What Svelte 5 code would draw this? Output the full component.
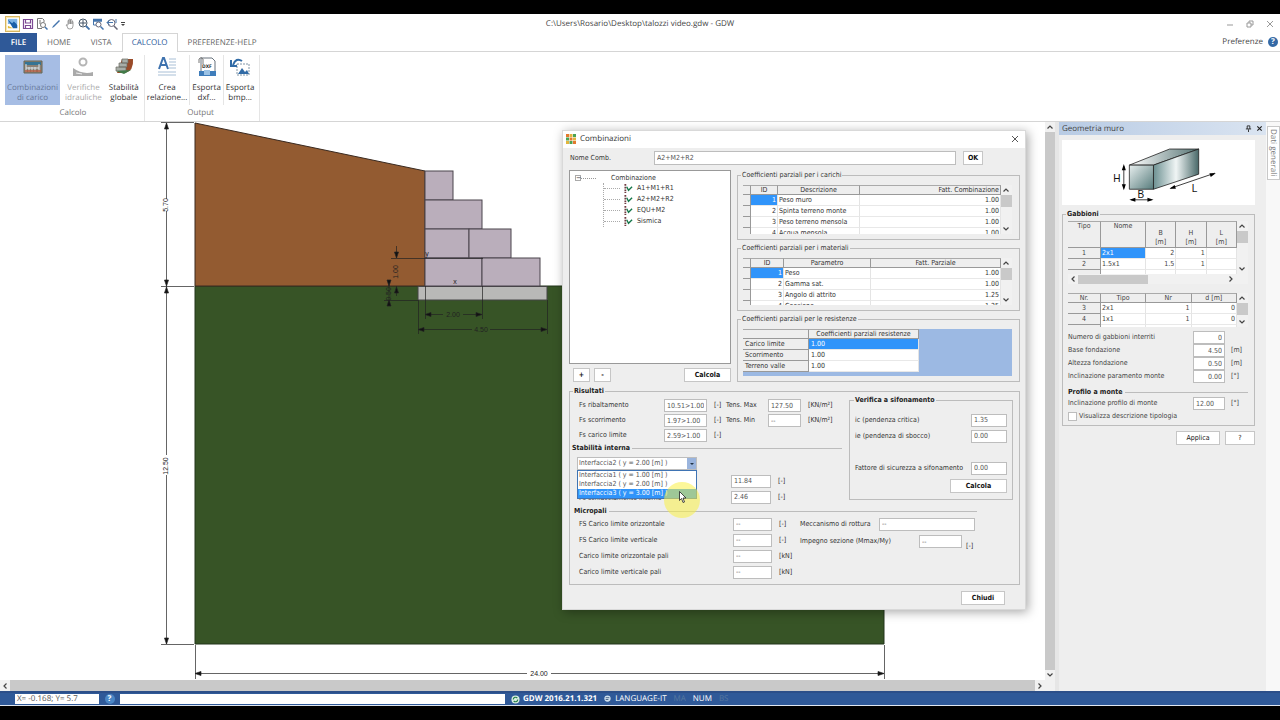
<script>
  const tabs = ["HOME", "VISTA", "CALCOLO", "PREFERENZE-HELP"];
  const combinations = ["A1+M1+R1", "A2+M2+R2", "EQU+M2", "Sismica"];
  const interfaces = [
    "Interfaccia1 ( y = 1.00 [m] )",
    "Interfaccia2 ( y = 2.00 [m] )",
    "Interfaccia3 ( y = 3.00 [m] )"
  ];

  const coefficients = [
    {
      id: "loads",
      title: "Coefficienti parziali per i carichi",
      columns: ["ID", "Descrizione", "Fatt. Combinazione"],
      rows: [
        ["Peso muro", "1.00"],
        ["Spinta terreno monte", "1.00"],
        ["Peso terreno mensola", "1.00"],
        ["Acqua mensola", "1.00"]
      ]
    },
    {
      id: "materials",
      title: "Coefficienti parziali per i materiali",
      columns: ["ID", "Parametro", "Fatt. Parziale"],
      rows: [
        ["Peso", "1.00"],
        ["Gamma sat.", "1.00"],
        ["Angolo di attrito", "1.25"],
        ["Coesione", "1.25"]
      ]
    }
  ];

  const resistances = [
    ["Carico limite", "1.00"],
    ["Scorrimento", "1.00"],
    ["Terreno valle", "1.00"]
  ];

  const results = [
    { label: "Fs ribaltamento", value: "10.51>1.00", side: "Tens. Max", sideValue: "127.50", unit: "[KN/m²]" },
    { label: "Fs scorrimento", value: "1.97>1.00", side: "Tens. Min", sideValue: "--", unit: "[KN/m²]" },
    { label: "Fs carico limite", value: "2.59>1.00" }
  ];

  const piles = [
    { label: "FS Carico limite orizzontale", unit: "[-]" },
    { label: "FS Carico limite verticale", unit: "[-]" },
    { label: "Carico limite orizzontale pali", unit: "[kN]" },
    { label: "Carico limite verticale pali", unit: "[kN]" }
  ];

  const geometry = [
    { label: "Numero di gabbioni interriti", value: "0", unit: "" },
    { label: "Base fondazione", value: "4.50", unit: "[m]" },
    { label: "Altezza fondazione", value: "0.50", unit: "[m]" },
    { label: "Inclinazione paramento monte", value: "0.00", unit: "[°]" }
  ];

  // x, y, width, height of each gabion
  const blocks = [
    [425, 171, 28, 29],
    [425, 200, 57, 29],
    [425, 229, 44, 29],
    [469, 229, 42, 29],
    [425, 258, 57, 28],
    [482, 258, 58, 28]
  ];

  let activeTab = $state("CALCOLO");
  let combinationName = $state("A2+M2+R2");
  let selected = $state(interfaces[1]);
  let hovered = $state(2);
  let showTypology = $state(false);
</script>

{#snippet chevron(direction)}
  <svg class="chevron {direction}" viewBox="0 0 10 10" aria-hidden="true">
    <path d="M2.500 6.500 5 4l2.500 2.500" fill="none" stroke="#444" stroke-width="1.200" />
  </svg>
{/snippet}

{#snippet scrollbar()}
  <div class="scrollbar">
    {@render chevron("up")}
    <div class="thumb"></div>
    {@render chevron("down")}
  </div>
{/snippet}

{#snippet arrow(x, y, angle)}
  <path d="M0 0-6-2v4z" transform="translate({x} {y}) rotate({angle})" />
{/snippet}

<div class="app">
  <header>
    <div class="titlebar">
      <div class="quick">
        <span class="app-icon">
          <svg viewBox="0 0 14 14"><path fill="#fff" d="M0 0h14v14H0z" /><path fill="#7fb4e6" d="M1 1h11v6H1z" /><path fill="#1b5fa8" d="M1 2l5 4 2-2 4 4v4H7z" /><path fill="#e4bd3b" d="M1 9l6 3H1z" /></svg>
        </span>
        <svg viewBox="0 0 12 12" fill="none" stroke="#7d4a94" stroke-width="1.200"><path d="M1.500 1.500h9v9h-9zM3.500 1.500v3.500h5V1.500M3.500 10.500v-3h5v3" /></svg>
        <svg viewBox="0 0 12 12" fill="none" stroke="#777"><path d="M8 4V2L6.500.500H1.500v10H6M3 3h2M3 5h2" /><circle cx="7" cy="7" r="2.500" /><path d="m9 9 2.500 2.500" stroke="#4475ad" stroke-width="1.500" /></svg>
        <svg viewBox="0 0 12 12"><path d="m2 10 1-2 6-6 1 1-6 6z" fill="#4475ad" /></svg>
        <svg viewBox="0 0 12 12" fill="none" stroke="#888"><path d="M4 7V3q0-1 1-1V6V1.500q1-1 1.500 0V6V2q1-1 1.500 0v4V3.500q1-.500 1 .500v4q0 3-3 3T3.500 9L2 7q.500-1 2 .500" stroke-width=".8" /></svg>
        <svg viewBox="0 0 12 12" fill="none" stroke="#456"><circle cx="5" cy="5" r="4" /><path d="M5 2v6M2 5h6" /><path d="m8 8 3.500 3.500" stroke="#4475ad" stroke-width="1.800" /></svg>
        <svg viewBox="0 0 12 12" fill="none" stroke="#4475ad"><path d="M1 1.500h9M1 3h9" stroke-width="1.500" /><path d="M1.500 3v4H4" /><circle cx="6.500" cy="6.500" r="2.500" fill="#fff" stroke="#667" /><path d="m8.500 8.500 3 3" stroke-width="1.500" /></svg>
        <svg viewBox="0 0 12 12" fill="none" stroke="#667"><circle cx="5.500" cy="5" r="3.500" /><path d="m8 8 3.500 3.500" stroke-width="1.500" /><path d="M1 4.500h6M3.500 2 1 4.500 3.500 7M10 1v4" stroke="#4475ad" /></svg>
        <svg class="more" viewBox="0 0 6 6"><path d="M1 1h4v1H1zM1 3h4L3 5z" fill="#444" /></svg>
      </div>
      <h1>C:\Users\Rosario\Desktop\talozzi video.gdw - GDW</h1>
      <div class="window-controls">
        <button aria-label="Riduci"><svg viewBox="0 0 8 8"><path d="M1 5h6" /></svg></button>
        <button aria-label="Ripristina"><svg viewBox="0 0 8 8"><path d="M1 3h4v4H1zM3 3V1h4v4H5" /></svg></button>
        <button aria-label="Chiudi finestra"><svg viewBox="0 0 8 8"><path d="m1 1 6 6m0-6-6 6" /></svg></button>
      </div>
    </div>

    <nav class="tabs">
      <button class="file">FILE</button>
      {#each tabs as tab}
        <button class:active={tab === activeTab} onclick={() => (activeTab = tab)}>{tab}</button>
      {/each}
      <a class="preferences" href="#preferenze">Preferenze <span class="help">?</span></a>
    </nav>

    <div class="ribbon">
      <section class="group">
        <div class="tools">
          <button class="tool current">
            <svg viewBox="0 0 22 22"><path d="M2 5h18v12H2z" fill="#8b8074" stroke="#665" /><path d="M3 6h16v3H3z" fill="#357494" /><path d="M4 8v8m3-5v5m3-5v5m3-5v5m4-8v8M4 12h13" stroke="#d8e5eb" /><path d="M3 15h16" stroke="#b45b3f" stroke-width="1.500" /></svg>
            <span>Combinazioni<br />di carico</span>
          </button>
          <button class="tool disabled" disabled>
            <svg viewBox="0 0 22 22"><circle cx="11" cy="6" r="3.500" fill="none" stroke="#b5b5b5" stroke-width="2" /><path d="M1 12q10 7 20 4v4H1z" fill="#aaa" /><path d="m4 17 6 1" stroke="#eee" /></svg>
            <span>Verifiche<br />idrauliche</span>
          </button>
          <button class="tool">
            <svg viewBox="0 0 22 22"><path d="M9 3h11q1 12-8 14H4z" fill="#9a4b29" /><path d="M9 3h6v4H9zM6 7h8v4H6zM3 11h10v4H3z" fill="#a9aea8" stroke="#6c6b63" stroke-width=".7" /><path d="m3 15 8 3 7-4" fill="#427b49" /></svg>
            <span>Stabilità<br />globale</span>
          </button>
        </div>
        <p>Calcolo</p>
      </section>
      <section class="group output">
        <div class="tools">
          <button class="tool">
            <svg viewBox="0 0 22 22"><path d="m3 13 4-11h1l4 11M5 9h5" fill="none" stroke="#3e72ae" stroke-width="2" /><path d="M13 3h7M13 6h7M13 9h7M13 12h7M2 16h18M2 19h18" stroke="#a8bfd6" /></svg>
            <span>Crea<br />relazione...</span>
          </button>
          <button class="tool">
            <svg viewBox="0 0 22 22"><path d="M5 2h11l3 3v13H5z" fill="#fff" stroke="#68737d" /><path d="M3 7V3q2-3 4 0v5" fill="none" stroke="#777" /><text x="6" y="12">DXF</text><path d="M3 15h17v5H3z" fill="#3f7dbb" /><path d="M8 14h6v5H8z" fill="#9bc2e5" /></svg>
            <span>Esporta<br />dxf...</span>
          </button>
          <button class="tool">
            <svg viewBox="0 0 22 22"><path d="M8 8h12v11H8z" fill="#fff" stroke="#8095a7" stroke-dasharray="2 1" /><path d="m9 18 4-6 3 4 2-2 2 4z" fill="#316ba6" /><path d="M13 5q-6-4-9 4M2 4v6h6" fill="none" stroke="#316ba6" stroke-width="2" /></svg>
            <span>Esporta<br />bmp...</span>
          </button>
        </div>
        <p>Output</p>
      </section>
    </div>
  </header>

  <main>
    <div class="view">
      <div class="canvas">
        <svg class="drawing" viewBox="0 122 1045 558" role="img" aria-label="Sezione del muro">
          <path d="M195 286h689v358H195z" fill="#375426" stroke="#23351b" />
          <path d="M195 123 425 171v115H195z" fill="#935b31" stroke="#3a2a20" />
          <path d="M418 286.500h129V300H418z" fill="#b9b9b7" stroke="#444" />
          {#each blocks as [x, y, width, height]}
            <rect {x} {y} {width} {height} fill="#baaebb" stroke="#4b444c" />
          {/each}
          <g class="dimensions">
            <path d="M166.500 123v76m0 12v75m0 0v169m0 20v169M161 122.500h33M161 286.500h33M161 644.500h33M195.500 645v34M884.500 645v34M195 673.500h332m24 0h333" />
            <path d="M396.500 246v12m0 28v10M391 258.500h92M389 285v18M384 300.500h34M425.500 286v33M482.500 286v33M425 314.500h18m20 0h19M418.500 300v34M547.500 300v34M418 329.500h54m18 0h57" />
            {@render arrow(166.5, 123, -90)}
            {@render arrow(166.5, 286, 90)}
            {@render arrow(166.5, 287, -90)}
            {@render arrow(166.5, 644, 90)}
            {@render arrow(195, 673.5, 180)}
            {@render arrow(884, 673.5, 0)}
            {@render arrow(396.5, 258, 90)}
            {@render arrow(396.5, 287, -90)}
            {@render arrow(389, 286, 90)}
            {@render arrow(389, 300, -90)}
            {@render arrow(425, 314.5, 180)}
            {@render arrow(482, 314.5, 0)}
            {@render arrow(418, 329.5, 180)}
            {@render arrow(547, 329.5, 0)}
            <text x="539" y="676">24.00</text>
            <text x="453" y="317">2.00</text>
            <text x="481" y="332">4.50</text>
            <text x="427" y="256">y</text>
            <text x="455" y="284">x</text>
            <text transform="translate(168 205) rotate(-90)">5.70</text>
            <text transform="translate(168 466) rotate(-90)">12.50</text>
            <text transform="translate(398 272) rotate(-90)">1.00</text>
            <text transform="translate(391 294) rotate(-90)">0.50</text>
          </g>
        </svg>
        <div class="scrollbar tall">
          {@render chevron("up")}
          <div class="thumb"></div>
          {@render chevron("down")}
        </div>
      </div>
      <div class="scroll-x">
        {@render chevron("left")}
        <div class="thumb"></div>
        {@render chevron("right")}
      </div>

      <div class="dialog" role="dialog" aria-label="Combinazioni">
        <div class="dialog-title">
          <svg viewBox="0 0 10 10"><path d="M0 0h3v3H0zM3.500 3.500h3v3h-3zM7 7h3v3H7z" fill="#e3782e" /><path d="M3.500 0h3v3h-3zM7 3.500h3v3H7zM0 7h3v3H0z" fill="#e2b53e" /><path d="M7 0h3v3H7zM0 3.500h3v3H0zM3.500 7h3v3h-3z" fill="#4aa353" /></svg>
          <h2>Combinazioni</h2>
          <button aria-label="Chiudi"><svg viewBox="0 0 8 8"><path d="m1 1 6 6m0-6-6 6" fill="none" stroke="#444" stroke-width=".9" /></svg></button>
        </div>

        <div class="name-row">
          <label for="name">Nome Comb.</label>
          <input id="name" bind:value={combinationName} />
          <button class="btn">OK</button>
        </div>

        <div class="upper">
          <div class="tree-column">
            <div class="tree">
              <p><span class="minus">−</span><i></i>Combinazione</p>
              <ul>
                {#each combinations as name}
                  <li>
                    <svg viewBox="0 0 10 10"><path d="M1.500 0v10" stroke="#713b40" stroke-width="2" stroke-dasharray="2 1" /><path d="m3 3 2 4 4-4" fill="none" stroke="#16784b" stroke-width="1.500" /></svg>
                    {name}
                  </li>
                {/each}
              </ul>
            </div>
            <div class="tree-actions">
              <button class="btn small">+</button>
              <button class="btn small">-</button>
              <button class="btn calc">Calcola</button>
            </div>
          </div>

          <div class="coefficients">
            {#each coefficients as group (group.id)}
              <fieldset>
                <legend>{group.title}</legend>
                <div class="grid-box {group.id}">
                  <table>
                    <colgroup><col class="c-mark" /><col class="c-id" /><col class="c-name" /><col /></colgroup>
                    <thead>
                      <tr>
                        <th></th>
                        {#each group.columns as column}<th>{column}</th>{/each}
                      </tr>
                    </thead>
                    <tbody>
                      {#each group.rows as [name, value], i}
                        <tr>
                          <th></th>
                          <td class="num" class:picked={i === 0}>{i + 1}</td>
                          <td>{name}</td>
                          <td class="num">{value}</td>
                        </tr>
                      {/each}
                    </tbody>
                  </table>
                  {@render scrollbar()}
                </div>
              </fieldset>
            {/each}
            <fieldset>
              <legend>Coefficienti parziali per le resistenze</legend>
              <div class="resistances">
                <table>
                  <thead><tr><th></th><th>Coefficienti parziali resistenze</th></tr></thead>
                  <tbody>
                    {#each resistances as [name, value], i}
                      <tr><th>{name}</th><td class:picked={i === 0}>{value}</td></tr>
                    {/each}
                  </tbody>
                </table>
              </div>
            </fieldset>
          </div>
        </div>

        <fieldset class="results">
          <legend class="bold">Risultati</legend>
          <div class="results-top">
            <div class="checks">
              {#each results as row, i}
                <div class="check-row">
                  <label for="fs{i}">{row.label}</label>
                  <input id="fs{i}" value={row.value} readonly />
                  <span class="unit">[-]</span>
                  {#if row.side}
                    <label for="tens{i}">{row.side}</label>
                    <input id="tens{i}" value={row.sideValue} readonly />
                    <span class="unit">{row.unit}</span>
                  {/if}
                </div>
              {/each}
              <h3>Stabilità interna</h3>
              <div class="combo">
                <select aria-label="Interfaccia" bind:value={selected}>
                  {#each interfaces as name}<option>{name}</option>{/each}
                </select>
                <span class="drop"></span>
                <ul role="listbox" aria-label="Interfacce">
                  {#each interfaces as name, i}
                    <li
                      role="option"
                      aria-selected={i === hovered}
                      class:hovered={i === hovered}
                      onmouseenter={() => (hovered = i)}
                    >{name}</li>
                  {/each}
                </ul>
                <span class="halo"></span>
                <svg class="pointer" viewBox="0 0 8 12"><path d="M.500.500v9l2-2 1.500 4 1.500-.500-1.500-4h3z" fill="#fff" stroke="#222" stroke-width=".8" /></svg>
              </div>
              <div class="inner-row">
                <span></span>
                <input aria-label="Fs scorrimento interno" value="11.84" readonly />
                <span class="unit">[-]</span>
              </div>
              <div class="inner-row">
                <label for="crush">Fs schiacciamento interno</label>
                <input id="crush" value="2.46" readonly />
                <span class="unit">[-]</span>
              </div>
            </div>

            <fieldset class="siphon">
              <legend class="bold">Verifica a sifonamento</legend>
              <div class="siphon-row">
                <label for="ic">ic (pendenza critica)</label>
                <input id="ic" value="1.35" readonly />
              </div>
              <div class="siphon-row">
                <label for="ie">ie (pendenza di sbocco)</label>
                <input id="ie" value="0.00" readonly />
              </div>
              <div class="siphon-row last">
                <label for="safety">Fattore di sicurezza a sifonamento</label>
                <input id="safety" value="0.00" readonly />
              </div>
              <button class="btn">Calcola</button>
            </fieldset>
          </div>

          <h3 class="wide">Micropali</h3>
          <div class="piles">
            <div>
              {#each piles as pile, i}
                <div class="pile-row">
                  <label for="pile{i}">{pile.label}</label>
                  <input id="pile{i}" value="--" readonly />
                  <span class="unit">{pile.unit}</span>
                </div>
              {/each}
            </div>
            <div>
              <div class="section-row">
                <label for="mechanism">Meccanismo di rottura</label>
                <input id="mechanism" value="--" readonly />
              </div>
              <div class="section-row usage">
                <label for="usage">Impegno sezione (Mmax/My)</label>
                <input id="usage" value="--" readonly />
                <span class="unit">[-]</span>
              </div>
            </div>
          </div>
        </fieldset>

        <div class="dialog-actions"><button class="btn">Chiudi</button></div>
      </div>
    </div>

    <aside class="dock">
      <div class="dock-title">
        <h2>Geometria muro</h2>
        <svg viewBox="0 0 8 8"><path d="M2.500 1h3v3.500M2.500 1v3.500M1 4.500h6M4 5v3" fill="none" stroke="#222" /></svg>
        <svg viewBox="0 0 8 8"><path d="m1.500 1.500 5 5m0-5-5 5" fill="none" stroke="#222" stroke-width="1.300" /></svg>
      </div>
      <div class="dock-body">
        <div class="preview">
          <svg viewBox="0 0 192 65">
            <defs>
              <linearGradient id="front" x1="0" y1="0" x2="1" y2="1"><stop offset="0" stop-color="#e8efef" /><stop offset="1" stop-color="#577c7c" /></linearGradient>
              <linearGradient id="side"><stop offset="0" stop-color="#6d9192" /><stop offset=".5" stop-color="#f0f5f5" /><stop offset="1" stop-color="#486868" /></linearGradient>
              <linearGradient id="top"><stop offset="0" stop-color="#fff" /><stop offset="1" stop-color="#567474" /></linearGradient>
            </defs>
            <path d="M67 25 107 9h29L91 25z" fill="url(#top)" stroke="#222" stroke-width=".8" />
            <path d="M91 25 136 9v25L91 49z" fill="url(#side)" stroke="#222" stroke-width=".8" />
            <path d="M67 25h24v24H67z" fill="url(#front)" stroke="#222" stroke-width=".8" />
            <path d="M61.500 26v22M69 59.500h20M108 48l44-15" stroke="#111" stroke-width=".8" />
            {@render arrow(61.5, 24, -90)}
            {@render arrow(61.5, 50, 90)}
            {@render arrow(67, 59.5, 180)}
            {@render arrow(91, 59.5, 0)}
            {@render arrow(107, 48.5, 161)}
            {@render arrow(153, 33, -19)}
            <text x="51" y="42">H</text>
            <text x="75" y="58">B</text>
            <text x="129" y="52">L</text>
          </svg>
        </div>

        <fieldset class="gabions">
          <legend class="bold">Gabbioni</legend>
          <div class="grid-box types">
            <table>
              <colgroup><col class="c-first" /><col class="c-second" /><col /><col /><col /></colgroup>
              <thead>
                <tr><th>Tipo</th><th>Nome</th><th class="low">B<br />[m]</th><th class="low">H<br />[m]</th><th class="low">L<br />[m]</th></tr>
              </thead>
              <tbody>
                <tr><th>1</th><td class="picked">2x1</td><td class="num">2</td><td class="num">1</td><td></td></tr>
                <tr><th>2</th><td>1.5x1</td><td class="num">1.5</td><td class="num">1</td><td></td></tr>
                <tr><th></th><td></td><td></td><td></td><td></td></tr>
              </tbody>
            </table>
            {@render scrollbar()}
          </div>
          <div class="scroll-x short">
            {@render chevron("left")}
            <div class="thumb"></div>
            {@render chevron("right")}
          </div>
          <div class="grid-box layers">
            <table>
              <colgroup><col class="c-first" /><col class="c-second" /><col /><col /></colgroup>
              <thead><tr><th>Nr.</th><th>Tipo</th><th>Nr</th><th>d [m]</th></tr></thead>
              <tbody>
                <tr><th>3</th><td>2x1</td><td class="num">1</td><td class="num">0</td></tr>
                <tr><th>4</th><td>1x1</td><td class="num">1</td><td class="num">0</td></tr>
                <tr><th></th><td></td><td></td><td></td></tr>
              </tbody>
            </table>
            {@render scrollbar()}
          </div>

          {#each geometry as field, i}
            <div class="geo-row">
              <label for="geo{i}">{field.label}</label>
              <input id="geo{i}" class="right" value={field.value} />
              <span class="unit">{field.unit}</span>
            </div>
          {/each}
          <h3>Profilo a monte</h3>
          <div class="geo-row">
            <label for="slope">Inclinazione profilo di monte</label>
            <input id="slope" value="12.00" />
            <span class="unit">[°]</span>
          </div>
          <label class="tick"><input type="checkbox" bind:checked={showTypology} />Visualizza descrizione tipologia</label>
        </fieldset>
        <div class="dock-actions">
          <button class="btn plain">Applica</button>
          <button class="btn plain">?</button>
        </div>
      </div>
    </aside>
    <div class="side-tabs"><button>Dati generali</button></div>
  </main>

  <footer>
    <span class="coords">X= -0.168; Y= 5.7</span>
    <button class="status-help" aria-label="Aiuto"><span>?</span></button>
    <span class="message"></span>
    <svg viewBox="0 0 10 10"><circle cx="5" cy="5" r="4.500" fill="#dcefe4" /><path d="M2.500 5a2.500 2.500 0 0 1 4.500-1.500M7.500 5A2.500 2.500 0 0 1 3 6.500" fill="none" stroke="#28804b" stroke-width="1.300" /></svg>
    <strong>GDW 2016.21.1.321</strong>
    <svg viewBox="0 0 10 10"><circle cx="5" cy="4" r="3.500" fill="#cfe0ee" /><path d="M3 3h4M3 5h3M7 7l2 2" stroke="#405c80" /></svg>
    <span>LANGUAGE-IT</span>
    <span class="off">MA</span>
    <span class="num-lock">NUM</span>
    <span class="off">BS</span>
  </footer>
</div>

<style>
  :global(body) {
    background: #000;
  }

  .app {
    --ui: "Open Sans", "Noto Sans", sans-serif;
    --form: "DejaVu Sans Condensed", "DejaVu Sans", sans-serif;
    --blue: #2f5998;
    --pick: #3094fa;
    --face: #eeeeee;
    --line: #bcbcbc;
    display: flex;
    flex-direction: column;
    box-sizing: border-box;
    min-height: 100vh;
    padding: 14px 0;
    font: 8px/10px var(--ui);
    color: #444;
  }

  .app * {
    box-sizing: border-box;
  }

  h1,
  h2,
  h3,
  p,
  ul {
    margin: 0;
    padding: 0;
    font-size: inherit;
    font-weight: 400;
    list-style: none;
  }

  button,
  input,
  select {
    margin: 0;
    padding: 0;
    border: 0;
    border-radius: 0;
    background: none;
    font: inherit;
    color: inherit;
    text-rendering: inherit;
  }

  svg {
    flex: none;
  }

  header,
  footer,
  .dialog-title,
  .dock-title,
  .side-tabs {
    text-rendering: geometricPrecision;
  }

  header {
    background: #fff;
    border-bottom: 1px solid #d5d5d5;
  }

  .titlebar {
    display: grid;
    grid-template-columns: 1fr auto 1fr;
    align-items: center;
    height: 19px;
  }

  .quick {
    display: flex;
    align-items: center;
    gap: 2px;
    padding-left: 5px;
  }

  .quick svg {
    width: 12px;
    height: 12px;
  }

  .app-icon {
    display: grid;
    place-items: center;
    width: 15px;
    height: 16px;
    border: 1px solid #d8b660;
    background: #f8e7b2;
  }

  .quick .more {
    width: 6px;
    height: 6px;
  }

  .window-controls {
    display: flex;
    justify-content: flex-end;
    gap: 12px;
    padding-right: 6px;
  }

  .window-controls svg {
    display: block;
    width: 8px;
    height: 8px;
    fill: none;
    stroke: #999;
  }

  .tabs {
    display: flex;
    height: 19px;
    border-bottom: 1px solid #d5d5d5;
  }

  .tabs button {
    height: 19px;
    padding: 0 9px;
    border: 1px solid transparent;
    border-bottom: 0;
    color: #666;
  }

  .tabs .file {
    width: 37px;
    padding: 0;
    background: var(--blue);
    color: #fff;
    font-weight: 600;
  }

  .tabs .active {
    border-color: #d5d5d5;
    background: #fff;
    color: #2b5a9b;
  }

  .preferences {
    display: flex;
    align-items: center;
    gap: 5px;
    margin-left: auto;
    padding-right: 2px;
    color: #444;
    text-decoration: none;
  }

  .help {
    width: 10px;
    border-radius: 50%;
    background: #3469a6;
    color: #fff;
    font-weight: 700;
    text-align: center;
  }

  .ribbon {
    display: flex;
    height: 69px;
    padding: 3px 0 0 5px;
  }

  .group {
    padding-right: 3px;
    border-right: 1px solid #e5e5e5;
    text-align: center;
  }

  .group p {
    color: #777;
    line-height: 16px;
  }

  .tools {
    display: flex;
    height: 50px;
  }

  .tool {
    display: flex;
    flex-direction: column;
    align-items: center;
    gap: 5px;
    padding: 1px 2px;
    color: #333;
  }

  .output .tool + .tool {
    border-left: 1px solid #e5e5e5;
  }

  .tool svg {
    width: 22px;
    height: 22px;
  }

  .tool text {
    font: 700 5px var(--ui);
    fill: #222;
  }

  .tool.current {
    background: #a6bde4;
    color: #68799a;
  }

  .tool.disabled {
    padding: 1px 5px;
    color: #aaa;
  }

  main {
    display: flex;
    flex: 1;
    background: #fff;
    font: 7px/9px var(--form);
  }

  .view {
    position: relative;
    display: flex;
    flex: 1;
    flex-direction: column;
    min-width: 0;
  }

  .canvas {
    display: flex;
    flex: 1;
  }

  .drawing {
    display: block;
    flex: 1;
    min-width: 0;
    align-self: flex-start;
  }

  .dimensions path {
    fill: #111;
    stroke: #222;
    stroke-width: 0.7px;
  }

  .dimensions text {
    font: 7px "Liberation Sans", sans-serif;
    fill: #222;
    text-anchor: middle;
  }

  .scrollbar {
    display: flex;
    flex-direction: column;
    width: 11px;
    background: #f1f1f1;
  }

  .chevron {
    display: block;
    width: 10px;
    height: 10px;
  }

  .down {
    margin-top: auto;
    transform: rotate(180deg);
  }

  .left {
    transform: rotate(-90deg);
  }

  .chevron.right {
    margin-left: auto;
    transform: rotate(90deg);
  }

  .thumb {
    height: 12px;
    background: #c9c9c9;
  }

  .scrollbar.tall {
    width: 10px;
  }

  .tall .thumb {
    flex: 1;
  }

  .scroll-x {
    display: flex;
    align-items: center;
    height: 11px;
    padding-right: 10px;
    background: #f1f1f1;
  }

  .scroll-x .thumb {
    flex: 1;
    height: 11px;
  }

  .dialog {
    position: absolute;
    top: 8px;
    right: 29px;
    width: 464px;
    padding: 0 5px 4px 6px;
    border: 1px solid #d9d9d9;
    background: var(--face);
    box-shadow: 2px 2px 10px rgba(0, 0, 0, 0.35);
    color: #333;
  }

  .dialog-title {
    display: flex;
    align-items: center;
    gap: 4px;
    height: 17px;
    margin: 0 -5px 0 -6px;
    padding: 0 6px 2px 3px;
    background: #fff;
    font: 8px/10px var(--ui);
  }

  .dialog-title > svg {
    width: 10px;
    height: 10px;
  }

  .dialog-title button {
    margin-left: auto;
  }

  .dialog-title button svg {
    display: block;
    width: 8px;
    height: 8px;
  }

  .name-row {
    display: grid;
    grid-template-columns: 84px 1fr 20px;
    align-items: center;
    padding: 3px 37px 5px 1px;
  }

  .name-row input {
    width: auto;
    height: 14px;
    margin-right: 7px;
  }

  input {
    width: 100%;
    height: 13px;
    padding: 0 2px;
    border: 1px solid #bdbdbd;
    background: #fff;
    color: #555;
    outline: 0;
  }

  input.right {
    text-align: right;
  }

  .btn {
    height: 14px;
    border: 1px solid #c6c6c6;
    background: #fff;
    color: #111;
    font-weight: 700;
    text-align: center;
  }

  .btn.plain {
    font-weight: 400;
  }

  .upper {
    display: grid;
    grid-template-columns: 162px 1fr;
    gap: 6px;
  }

  .tree-column {
    display: flex;
    flex-direction: column;
    gap: 4px;
  }

  .tree {
    flex: 1;
    padding: 2px 5px;
    border: 1px solid #999;
    background: #fff;
  }

  .tree p {
    display: flex;
    align-items: center;
    height: 10px;
  }

  .tree i {
    width: 15px;
    margin: 0 15px 0 0;
    border-top: 1px dotted #999;
  }

  .minus {
    width: 6px;
    height: 6px;
    border: 1px solid #aaa;
    line-height: 4px;
    text-align: center;
  }

  .tree ul {
    margin-left: 28px;
    border-left: 1px dotted #aaa;
  }

  .tree li {
    display: flex;
    align-items: center;
    gap: 4px;
    height: 11px;
  }

  .tree li::before {
    content: "";
    width: 16px;
    border-top: 1px dotted #aaa;
  }

  .tree li svg {
    width: 9px;
    height: 9px;
  }

  .tree-actions {
    display: flex;
    gap: 4px;
    padding-left: 4px;
  }

  .small {
    width: 17px;
  }

  .calc {
    width: 47px;
    margin-left: auto;
  }

  .coefficients {
    display: flex;
    flex-direction: column;
    gap: 4px;
    min-width: 0;
    padding-top: 1px;
  }

  fieldset {
    min-width: 0;
    margin: 0;
    padding: 5px 7px 5px 5px;
    border: 1px solid var(--line);
  }

  legend {
    margin-left: -2px;
    padding: 0 1px;
  }

  .bold {
    font-weight: 700;
    color: #222;
  }

  .grid-box {
    display: flex;
    overflow: hidden;
    background: #fff;
  }

  .loads {
    height: 49px;
  }

  .materials {
    height: 47px;
  }

  table {
    flex: 1;
    align-self: flex-start;
    width: 100%;
    border-collapse: separate;
    border-spacing: 0;
    table-layout: fixed;
  }

  th,
  td {
    height: 11px;
    padding: 0 1px;
    border-right: 1px solid #e4e4e4;
    border-bottom: 1px solid #e8e8e8;
    overflow: hidden;
    white-space: nowrap;
  }

  th {
    border-color: #999;
    background: var(--face);
    font-weight: 400;
  }

  thead th {
    height: 10px;
    border-top: 1px solid #aaa;
    line-height: 8px;
  }

  .num {
    text-align: right;
  }

  .picked {
    background: var(--pick);
    color: #fff;
  }

  .c-mark {
    width: 8px;
  }

  .c-id {
    width: 27px;
  }

  .c-name {
    width: 82px;
  }

  .materials .c-id {
    width: 33px;
  }

  .materials .c-name {
    width: 87px;
  }

  .loads thead th:last-child {
    text-align: right;
  }

  .resistances {
    height: 47px;
    background: #9cb9e3;
  }

  .resistances table {
    width: 176px;
    background: #fff;
  }

  .resistances th:first-child {
    width: 66px;
    text-align: left;
  }

  .resistances th,
  .resistances td {
    padding: 0 2px;
  }

  .results {
    margin-top: 5px;
    padding: 0 6px 4px 1px;
  }

  .results > legend {
    margin-left: 2px;
  }

  .results-top {
    display: grid;
    grid-template-columns: 1fr 164px;
    align-items: start;
    gap: 7px;
  }

  .checks {
    padding-top: 2px;
  }

  .check-row {
    display: grid;
    grid-template-columns: 85px 43px 19px 42px 33px 1fr;
    align-items: center;
    height: 15px;
    padding-left: 8px;
  }

  .unit {
    padding-left: 7px;
  }

  h3 {
    display: flex;
    align-items: center;
    gap: 2px;
    height: 10px;
    padding-left: 1px;
    color: #222;
    font-weight: 700;
  }

  h3::after {
    content: "";
    flex: 1;
    border-top: 1px solid var(--line);
  }

  .combo {
    position: relative;
    display: flex;
    width: 120px;
    height: 13px;
    margin: 4px 0 3px 6px;
    border: 1px solid #bdbdbd;
    background: #fff;
  }

  .combo select {
    flex: 1;
    min-width: 0;
    padding: 0 1px;
    appearance: none;
    color: #555;
    outline: 0;
  }

  .drop {
    display: grid;
    place-items: center;
    width: 9px;
    background: #9ab4dd;
    pointer-events: none;
  }

  .drop::after {
    content: "";
    border: 2px solid transparent;
    border-top-color: #234;
    border-bottom: 0;
  }

  .combo ul {
    position: absolute;
    z-index: 1;
    top: 12px;
    left: -1px;
    width: 120px;
    border: 1px solid #3f74b4;
    background: #fff;
    color: #555;
  }

  .combo li {
    padding-left: 1px;
  }

  .combo .hovered {
    background: var(--pick);
    color: #fff;
  }

  .halo {
    position: absolute;
    z-index: 2;
    top: 24px;
    left: 86px;
    width: 36px;
    height: 36px;
    border-radius: 50%;
    background: rgba(250, 240, 70, 0.55);
    pointer-events: none;
  }

  .pointer {
    position: absolute;
    z-index: 3;
    top: 33px;
    left: 101px;
    width: 8px;
    height: 12px;
    pointer-events: none;
  }

  .inner-row,
  .pile-row {
    display: grid;
    grid-template-columns: 152px 40px 1fr;
    align-items: center;
    height: 16px;
    padding-left: 8px;
  }

  .inner-row label {
    padding-top: 3px;
  }

  .siphon {
    padding: 7px 5px 6px 5px;
  }

  .siphon legend {
    margin-left: -1px;
  }

  .siphon-row {
    display: grid;
    grid-template-columns: 1fr 36px;
    align-items: center;
    height: 16px;
    white-space: nowrap;
  }

  .siphon-row.last {
    margin: 16px 0 3px;
  }

  .siphon .btn {
    display: block;
    width: 57px;
    margin-left: auto;
  }

  .wide {
    margin: 1px 36px 0 2px;
  }

  .piles {
    display: grid;
    grid-template-columns: 229px 1fr;
  }

  .pile-row {
    grid-template-columns: 154px 39px 1fr;
  }

  .section-row {
    display: grid;
    grid-template-columns: 79px 96px;
    align-items: center;
    height: 16px;
    white-space: nowrap;
  }

  .section-row.usage {
    grid-template-columns: 119px 43px 1fr;
  }

  .usage .unit {
    padding: 10px 0 0 4px;
  }

  .dialog-actions {
    display: flex;
    justify-content: flex-end;
    padding: 6px 15px 0 0;
  }

  .dialog-actions .btn {
    width: 44px;
  }

  .dock {
    width: 207px;
    margin-left: 4px;
    background: var(--face);
    box-shadow: -4px 0 0 #e6e6e6;
  }

  .dock-title {
    display: flex;
    align-items: center;
    gap: 4px;
    height: 13px;
    padding: 0 3px;
    background: linear-gradient(90deg, #b8cbe4, #dae4f1);
    font: 8px/10px var(--ui);
  }

  .dock-title h2 {
    flex: 1;
  }

  .dock-title svg {
    width: 7px;
    height: 7px;
  }

  .dock-body {
    padding: 5px 11px 0 3px;
  }

  .preview {
    background: #fff;
  }

  .preview svg {
    display: block;
    width: 100%;
  }

  .preview text {
    font: 10px "Liberation Sans", sans-serif;
    fill: #111;
  }

  .gabions {
    margin-top: 5px;
    padding: 2px 6px 2px 5px;
  }

  .gabions .c-first {
    width: 33px;
  }

  .gabions .c-second {
    width: 45px;
  }

  .gabions .types {
    height: 53px;
  }

  .types thead th {
    height: 27px;
    line-height: 9px;
    vertical-align: top;
  }

  .types thead .low {
    vertical-align: bottom;
  }

  .short {
    height: 10px;
    padding-right: 12px;
  }

  .short .thumb {
    flex: none;
    width: 70px;
    height: 9px;
  }

  .layers {
    height: 34px;
    margin: 9px 0 4px;
  }

  .geo-row {
    display: grid;
    grid-template-columns: 125px 32px 1fr;
    align-items: center;
    height: 13px;
    white-space: nowrap;
  }

  .geo-row .unit {
    padding-left: 6px;
  }

  .gabions h3 {
    margin-top: 4px;
    padding: 0;
  }

  .tick {
    display: flex;
    align-items: center;
    gap: 2px;
    height: 13px;
  }

  .tick input {
    appearance: none;
    width: 9px;
    height: 9px;
    padding: 0;
  }

  .tick input:checked {
    background: #555;
  }

  .dock-actions {
    display: flex;
    justify-content: flex-end;
    gap: 5px;
    padding-top: 5px;
  }

  .dock-actions .btn {
    width: 30px;
  }

  .dock-actions .btn:first-child {
    width: 44px;
  }

  .side-tabs {
    width: 14px;
    padding: 4px 0 0 1px;
    background: #f8f8f8;
  }

  .side-tabs button {
    width: 13px;
    height: 54px;
    border: 1px solid #c8c8c8;
    background: #fff;
    color: #777;
    font: 8px/11px var(--ui);
    writing-mode: vertical-rl;
  }

  footer {
    display: flex;
    align-items: center;
    height: 15px;
    padding-left: 15px;
    border-top: 2px solid #2c4f89;
    border-bottom: 1px solid #dfe6f0;
    background: var(--blue);
    color: #fff;
  }

  footer svg {
    width: 9px;
    height: 9px;
    margin: 0 3px 0 6px;
  }

  .coords {
    width: 84px;
    padding-left: 2px;
    background: #fff;
    color: #555;
  }

  .status-help {
    width: 21px;
    font-weight: 700;
  }

  .status-help span {
    display: block;
    width: 10px;
    margin: 0 auto;
    border-radius: 50%;
    background: #4a86c5;
  }

  .message {
    width: 385px;
    height: 10px;
    background: #fff;
  }

  .off {
    margin: 0 7px;
    color: #56779f;
  }
</style>
